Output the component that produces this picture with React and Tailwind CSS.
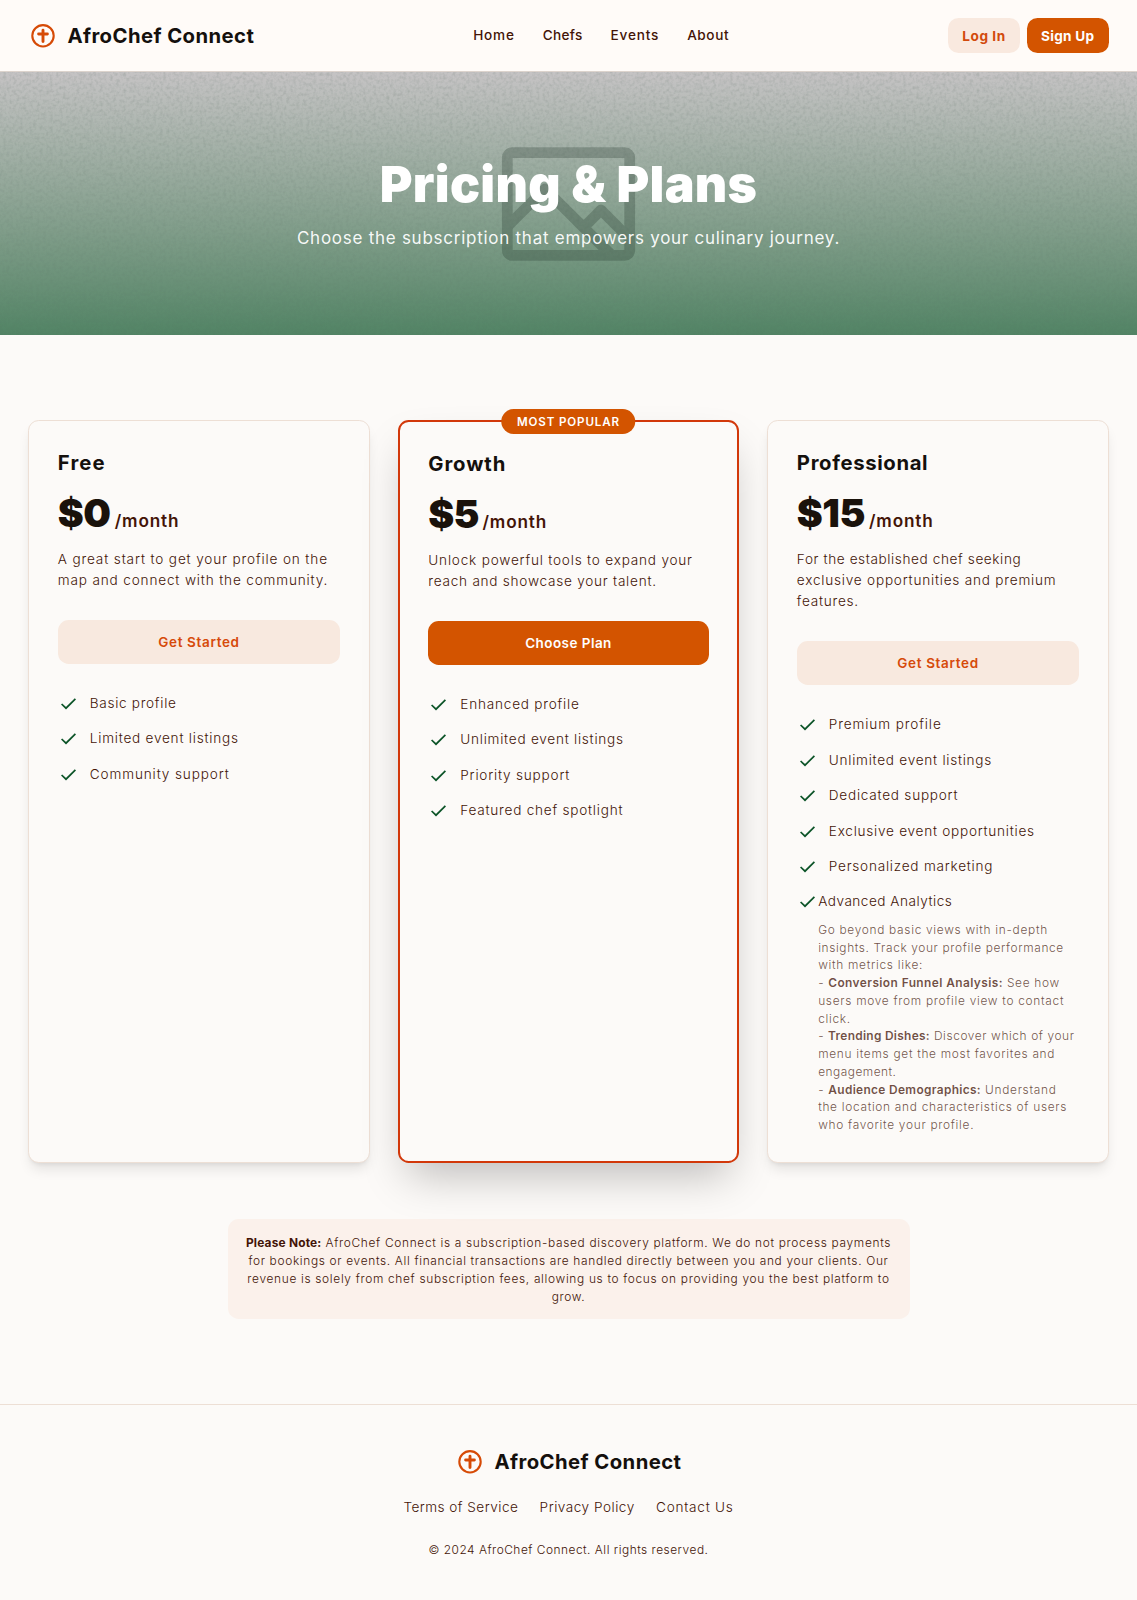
import React from "react";

function Logo({ className = "" }) {
  return (
    <div className={`flex items-center ${className}`}>
      <svg width="28" height="28" viewBox="0 0 28 28" fill="none" stroke="#d64a06">
        <circle cx="14" cy="13.8" r="10.7" strokeWidth="2.1" />
        <path d="M14 8.2v11.4M9.6 12h8.8" strokeWidth="2.9" strokeLinecap="round" />
      </svg>
      <span className="ml-[11px] text-[20.3px] font-bold tracking-[0.43px] leading-[28px] text-[#14100d]">
        AfroChef Connect
      </span>
    </div>
  );
}

function Header() {
  return (
    <header className="flex h-[72px] items-center justify-between border-b border-[#dcd3cc] bg-[#fffbf8] px-[28.5px]">
      <Logo />
      <nav className="flex gap-[28px] text-[13.6px] font-[450] text-[#431407]">
        <a className="tracking-[0.8px]">Home</a>
        <a className="tracking-[0.3px]">Chefs</a>
        <a className="tracking-[0.8px]">Events</a>
        <a className="tracking-[0.6px]">About</a>
      </nav>
      <div className="flex gap-[7px] text-[13.6px] font-bold">
        <button className="h-[35.5px] w-[72px] rounded-[10.5px] bg-[#f9e9df] pt-px tracking-[0.55px] text-[#d24a0c]">Log In</button>
        <button className="h-[35.5px] w-[81.5px] rounded-[10.5px] bg-[#d35400] pt-px tracking-[0.3px] text-white">Sign Up</button>
      </div>
    </header>
  );
}

function Hero() {
  return (
    <section className="relative h-[263px] overflow-hidden bg-linear-to-b from-[#c5c3c4] to-[#528465]">
      <svg className="absolute inset-0" width="1137" height="263" viewBox="0 72 1137 263" fill="none">
        <filter id="grain" x="0" y="0" width="100%" height="100%">
          <feTurbulence type="fractalNoise" baseFrequency="0.3" numOctaves="2" seed="4" />
          <feColorMatrix values="0 0 0 0 0.1  0 0 0 0 0.15  0 0 0 0 0.12  1.3 0 0 0 -0.55" />
          <feGaussianBlur stdDeviation="0.5" />
        </filter>
        <linearGradient id="fade" x1="0" y1="0" x2="0" y2="1">
          <stop offset="0" stopColor="#fff" />
          <stop offset="1" stopColor="#666" />
        </linearGradient>
        <mask id="grainFade">
          <rect x="0" y="72" width="1137" height="263" fill="url(#fade)" />
        </mask>
        <g mask="url(#grainFade)">
          <rect x="0" y="72" width="1137" height="263" filter="url(#grain)" opacity="0.32" />
        </g>
        <g stroke="#1c2e24" strokeWidth="10.8" opacity="0.25">
          <rect x="507.3" y="152.6" width="122.4" height="102.8" rx="5" />
          <path d="M507.3 226.5L545 189L611 254.7M583.5 227.5L601 210L629.7 238.7" strokeLinejoin="round" />
        </g>
      </svg>
      <div className="relative flex flex-col items-center pt-[85.5px] text-white">
        <h1 className="text-[50px] leading-[53px] font-black tracking-[0.3px] whitespace-nowrap">Pricing &amp; Plans</h1>
        <p className="mt-[15px] text-[17px] leading-[25px] tracking-[0.74px] whitespace-nowrap text-white/95">
          Choose the subscription that empowers your culinary journey.
        </p>
      </div>
    </section>
  );
}

function Check() {
  return (
    <svg className="shrink-0" width="21.3" height="21.3" viewBox="0 0 21.3 21.3" fill="none" stroke="#0b5327" strokeWidth="1.7">
      <path d="M3.6 11L8 15.2L17.4 5.9" />
    </svg>
  );
}

function Plan({ name, nameClass, price, priceClass, lines, cta, ctaClass, features, popular, children }) {
  return (
    <div
      className={
        popular
          ? "relative flex flex-col rounded-[10.7px] border-2 border-[#d2380a] bg-[#fcfaf8] p-[28.4px] shadow-[0_22px_44px_-10px_rgba(0,0,0,0.25)]"
          : "relative flex flex-col rounded-[10.7px] border border-[#eddfd5] bg-[#fcfaf8] p-[28.4px] shadow-[0_9px_13px_-3px_rgba(0,0,0,0.1),0_3.5px_5px_-3.5px_rgba(0,0,0,0.1)]"
      }
    >
      {popular && (
        <span className="absolute -top-[13px] left-1/2 flex h-[25px] w-[133.5px] -translate-x-1/2 items-center justify-center rounded-full bg-[#d35400] pt-[1.5px] text-[11.6px] font-semibold tracking-[0.85px] whitespace-nowrap text-white">
          MOST POPULAR
        </span>
      )}
      <h3 className={`text-[20.3px] leading-[28.4px] font-bold text-[#14100d] ${nameClass}`}>{name}</h3>
      <p className="mt-[14px] flex h-[43px] items-baseline leading-[41.5px] whitespace-nowrap">
        <span className={`text-[39px] font-black text-[#1a120b] ${priceClass}`}>{price}</span>
        <span className="ml-[4px] text-[17.2px] font-semibold tracking-[0.85px] text-[#431407]">/month</span>
      </p>
      <p className="mt-[14px] text-[13.6px] leading-[21.3px] font-[350] text-[#431407]">
        {lines.map(([text, cls]) => (
          <span key={text} className={`block whitespace-nowrap ${cls}`}>{text}</span>
        ))}
      </p>
      <button className={`mt-[28.6px] h-[44.2px] w-full shrink-0 rounded-[10.7px] text-[13.5px] font-semibold ${ctaClass}`}>{cta}</button>
      <ul className="mt-[28.6px] flex flex-col gap-[14.2px] text-[13.6px] leading-[21.3px] font-[350] text-[#431407]">
        {features.map(([text, cls]) => (
          <li key={text} className="flex items-center">
            <Check />
            <span className={`ml-[10.7px] whitespace-nowrap ${cls}`}>{text}</span>
          </li>
        ))}
        {children}
      </ul>
    </div>
  );
}

function Analytics() {
  return (
    <li className="flex items-start">
      <Check />
      <div className="whitespace-nowrap">
        <span className="block tracking-[0.5px]">Advanced Analytics</span>
        <div className="mt-[8px] text-[11.9px] leading-[17.77px] tracking-[0.7px] text-[#431407]/75">
          <span className="block">Go beyond basic views with in-depth</span>
          <span className="block tracking-[0.63px]">insights. Track your profile performance</span>
          <span className="block">with metrics like:</span>
          <span className="block">- <b className="font-semibold tracking-[0.42px]">Conversion Funnel Analysis:</b> See how</span>
          <span className="block">users move from profile view to contact</span>
          <span className="block">click.</span>
          <span className="block tracking-[0.6px]">- <b className="font-semibold tracking-[0.3px]">Trending Dishes:</b> Discover which of your</span>
          <span className="block">menu items get the most favorites and</span>
          <span className="block tracking-[0.5px]">engagement.</span>
          <span className="block">- <b className="font-semibold tracking-[0.34px]">Audience Demographics:</b> Understand</span>
          <span className="block">the location and characteristics of users</span>
          <span className="block">who favorite your profile.</span>
        </div>
      </div>
    </li>
  );
}

export default function App() {
  return (
    <div className="h-[1600px] w-full overflow-hidden bg-[#fcfaf8] font-[Inter,sans-serif]">
      <Header />
      <Hero />
      <main className="px-[28.4px] pt-[85px]">
        <div className="grid h-[742.3px] grid-cols-3 gap-[28.4px]">
          <Plan
            name="Free" nameClass="tracking-[1.1px]" price="$0" priceClass="tracking-[-0.4px]"
            lines={[["A great start to get your profile on the", "tracking-[0.85px]"], ["map and connect with the community.", "tracking-[0.83px]"]]}
            cta="Get Started" ctaClass="bg-[#f8e9df] text-[#d64a0a] tracking-[0.65px]"
            features={[["Basic profile", "tracking-[0.7px]"], ["Limited event listings", "tracking-[0.76px]"], ["Community support", "tracking-[0.86px]"]]}
          />
          <Plan
            popular
            name="Growth" nameClass="tracking-[0.9px]" price="$5" priceClass="tracking-[-0.9px]"
            lines={[["Unlock powerful tools to expand your", "tracking-[0.79px]"], ["reach and showcase your talent.", "tracking-[0.75px]"]]}
            cta="Choose Plan" ctaClass="bg-[#d35400] text-white tracking-[0.45px]"
            features={[["Enhanced profile", "tracking-[0.78px]"], ["Unlimited event listings", "tracking-[0.74px]"], ["Priority support", "tracking-[0.78px]"], ["Featured chef spotlight", "tracking-[0.76px]"]]}
          />
          <Plan
            name="Professional" nameClass="tracking-[0.65px]" price="$15" priceClass="tracking-[-0.5px]"
            lines={[["For the established chef seeking", "tracking-[0.6px]"], ["exclusive opportunities and premium", "tracking-[0.78px]"], ["features.", "tracking-[0.76px]"]]}
            cta="Get Started" ctaClass="bg-[#f8e9df] text-[#d64a0a] tracking-[0.65px]"
            features={[["Premium profile", "tracking-[0.88px]"], ["Unlimited event listings", "tracking-[0.73px]"], ["Dedicated support", "tracking-[0.75px]"], ["Exclusive event opportunities", "tracking-[0.74px]"], ["Personalized marketing", "tracking-[0.76px]"]]}
          >
            <Analytics />
          </Plan>
        </div>
        <div className="mx-auto mt-[56.8px] h-[99.5px] w-[682px] rounded-[10.7px] bg-[#fbf1eb] pt-[15.4px] text-center text-[11.9px] leading-[17.77px] font-[350] whitespace-nowrap text-[#431407]">
          <span className="block tracking-[0.68px]"><b className="font-bold tracking-[0.2px]">Please Note:</b> AfroChef Connect is a subscription-based discovery platform. We do not process payments</span>
          <span className="block tracking-[0.67px]">for bookings or events. All financial transactions are handled directly between you and your clients. Our</span>
          <span className="block tracking-[0.68px]">revenue is solely from chef subscription fees, allowing us to focus on providing you the best platform to</span>
          <span className="block tracking-[0.68px]">grow.</span>
        </div>
      </main>
      <footer className="mt-[85.3px] flex flex-col items-center border-t border-[#eddfd5] pt-[43px] font-[350] text-[#431407]">
        <Logo />
        <div className="mt-[21.5px] flex gap-[21.3px] text-[13.6px] leading-[21.3px]">
          <a className="tracking-[0.46px]">Terms of Service</a>
          <a className="tracking-[0.5px]">Privacy Policy</a>
          <a className="tracking-[0.75px]">Contact Us</a>
        </div>
        <p className="mt-[22.5px] text-[11.9px] leading-[17.8px] tracking-[0.51px]">© 2024 AfroChef Connect. All rights reserved.</p>
      </footer>
    </div>
  );
}
